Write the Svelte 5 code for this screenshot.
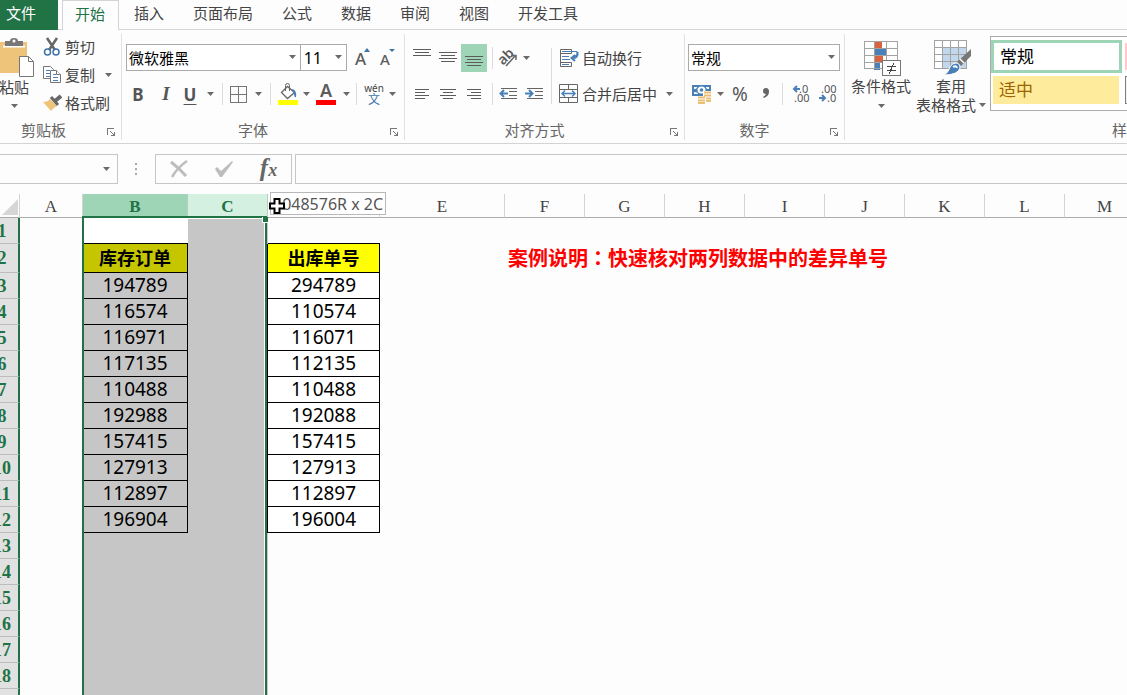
<script>
  const tabs = ['插入', '页面布局', '公式', '数据', '审阅', '视图', '开发工具'];
  const columns = ['A', 'B', 'C', 'D', 'E', 'F', 'G', 'H', 'I', 'J', 'K', 'L', 'M'];
  const stock = ['库存订单', 194789, 116574, 116971, 117135, 110488, 192988, 157415, 127913, 112897, 196904];
  const shipped = ['出库单号', 294789, 110574, 116071, 112135, 110488, 192088, 157415, 127913, 112897, 196004];
  const rows = Array.from({ length: 19 }, (_, i) => i + 1);
  const isData = (row) => row >= 2 && row <= 12;

  function cellText(row, column) {
    if (!isData(row)) return '';
    if (column === 'B') return stock[row - 2];
    if (column === 'D') return shipped[row - 2];
    return '';
  }
</script>

{#snippet caret()}
  <svg class="caret" width="7" height="4" viewBox="0 0 7 4" aria-hidden="true"><path d="M0 0h7L3.5 4z" fill="#6a6a6a" /></svg>
{/snippet}

{#snippet launcher(name)}
  <button class="launcher" aria-label={name}>
    <svg width="8" height="8" viewBox="0 0 8 8" fill="none" stroke="#777" shape-rendering="crispEdges"><path d="M.5 7V.5H7M3 3l4 4M7.5 3.500v4h-4" /><path d="M5 7h3V4z" fill="#777" stroke="none" /></svg>
  </button>
{/snippet}

{#snippet lines(list)}
  <svg width="18" height="18" viewBox="0 0 18 18" stroke="#5c5c5c" shape-rendering="crispEdges" aria-hidden="true">
    {#each list as [x1, x2, y]}<path d={`M${x1} ${y}.5H${x2}`} />{/each}
  </svg>
{/snippet}

<div class="app">
  <nav class="tabs">
    <button class="file">文件</button>
    <button class="active">开始</button>
    {#each tabs as tab}<button>{tab}</button>{/each}
  </nav>

  <div class="ribbon">
    <section class="group clipboard">
      <div class="body">
        <button class="paste">
          <svg width="40" height="40" viewBox="0 0 40 40" aria-hidden="true">
            <path d="M2 4h31v31H2z" fill="#eec47a" />
            <path d="M11 8V3h5q0-3 4-3t4 3h5v5z" fill="#777" /><path d="M9 8.500h22" stroke="#fff" stroke-width="2" /><path d="M11 5h18v3H11z" fill="#777" /><circle cx="20" cy="3" r="1.500" fill="#fff" />
            <path d="M25.500 18.500h9l5 5v15h-14z" fill="#fff" stroke="#777" /><path d="M34.500 18.500v5h5" fill="none" stroke="#777" />
          </svg>
          <span>粘贴</span>
          {@render caret()}
        </button>
        <div class="stack">
          <button>
            <svg width="18" height="20" viewBox="0 0 18 20" fill="none" aria-hidden="true"><path d="M4 1l8 12M14 1L6 13" stroke="#666" stroke-width="2.500" /><circle cx="4.500" cy="15" r="3" stroke="#3f74ab" stroke-width="1.500" /><circle cx="13" cy="15" r="3" stroke="#3f74ab" stroke-width="1.500" /></svg>
            剪切
          </button>
          <button>
            <svg width="18" height="20" viewBox="0 0 18 20" fill="#fff" stroke="#777" aria-hidden="true"><path d="M.5 1.500h7l3 3v9H.5z" /><path d="M3 5.500h4M3 8.500h5M3 11.500h4" stroke="#4a80b8" /><path d="M7.500 5.500h6l4 4v8h-10z" /><path d="M13.500 5.500v4h4" /><path d="M10 9.500h3M10 12.500h5M10 15.500h5" stroke="#4a80b8" /></svg>
            复制
            {@render caret()}
          </button>
          <button>
            <svg width="18" height="20" viewBox="0 0 18 20" aria-hidden="true"><path d="M0 9q5 0 7-3l7 7q-3 1-6 5z" fill="#eec47a" /><path d="M8 4l7 8" stroke="#666" stroke-width="3" /><path d="M12 8l6-5" stroke="#666" stroke-width="4" /></svg>
            格式刷
          </button>
        </div>
      </div>
      <footer><span>剪贴板</span>{@render launcher('剪贴板')}</footer>
    </section>

    <section class="group font">
      <div class="body rows">
        <div class="combos">
          <label class="combo wide"><select aria-label="字体"><option>微软雅黑</option></select>{@render caret()}</label>
          <label class="combo narrow"><select class="num" aria-label="字号"><option>11</option></select>{@render caret()}</label>
          <button class="resize" aria-label="增大字号">
            <svg width="20" height="24" viewBox="0 0 20 24"><text x="2" y="19" class="letter" font-size="17">A</text><path d="M11 6l3-4 3 4z" fill="#3f74ab" /></svg>
          </button>
          <button class="resize" aria-label="减小字号">
            <svg width="20" height="24" viewBox="0 0 20 24"><text x="2" y="19" class="letter" font-size="15">A</text><path d="M11 3h6l-3 3z" fill="#3f74ab" /></svg>
          </button>
        </div>
        <div class="tools font-tools">
          <button class="bold">B</button>
          <button class="italic">I</button>
          <button class="under">U</button>
          <button aria-label="下划线选项">{@render caret()}</button>
          <i class="sep"></i>
          <button aria-label="边框"><svg width="17" height="17" viewBox="0 0 17 17" fill="none" stroke="#777" shape-rendering="crispEdges"><path d="M.5.5h16v16H.5zM8.500 0v17M0 8.500h17" /></svg></button>
          <button aria-label="边框选项">{@render caret()}</button>
          <i class="sep"></i>
          <button aria-label="填充颜色"><svg width="20" height="22" viewBox="0 0 20 22"><path d="M3.500 9.500l6-6 7 6-7 6z" fill="#fff" stroke="#666" stroke-width="1.300" /><path d="M7.500 8V2.500q0-2 2-2t2 2V8" fill="none" stroke="#666" /><path d="M13 6q6 0 5 8-2 1-2-4z" fill="#4a80b8" /><path d="M0 17h20v5H0z" fill="#ff0" /></svg></button>
          <button aria-label="填充颜色选项">{@render caret()}</button>
          <button aria-label="字体颜色"><svg width="20" height="22" viewBox="0 0 20 22"><text x="10" y="14" text-anchor="middle" class="glyph" font-size="18">A</text><path d="M0 17h20v5H0z" fill="#f00" /></svg></button>
          <button aria-label="字体颜色选项">{@render caret()}</button>
          <i class="sep"></i>
          <button class="pinyin"><span>wén</span><b>文</b></button>
          <button aria-label="拼音选项">{@render caret()}</button>
        </div>
      </div>
      <footer><span>字体</span>{@render launcher('字体设置')}</footer>
    </section>

    <section class="group align">
      <div class="body">
        <div class="rows">
          <div class="tools align-tools">
            <button aria-label="顶端对齐">{@render lines([[0, 18, 0], [2, 16, 3], [0, 18, 6]])}</button>
            <button aria-label="垂直居中">{@render lines([[0, 18, 3], [2, 16, 6], [0, 18, 9], [2, 16, 12]])}</button>
            <button class="on" aria-label="底端对齐">{@render lines([[0, 18, 7], [2, 16, 10], [0, 18, 13], [2, 16, 16]])}</button>
            <i class="sep"></i>
            <button aria-label="方向"><svg width="22" height="24" viewBox="0 0 22 24"><text x="1" y="16" transform="rotate(-45 8 12)" class="glyph" font-size="14">ab</text><path d="M9 20l9-10M14 9.500h5V14" fill="none" stroke="#666" stroke-width="1.500" /></svg></button>
            <button aria-label="方向选项">{@render caret()}</button>
          </div>
          <div class="tools align-tools">
            <button aria-label="左对齐">{@render lines([[2, 16, 4], [2, 12, 7], [2, 16, 10], [2, 12, 13]])}</button>
            <button aria-label="居中">{@render lines([[1, 17, 4], [4, 14, 7], [1, 17, 10], [4, 14, 13]])}</button>
            <button aria-label="右对齐">{@render lines([[2, 16, 4], [6, 16, 7], [2, 16, 10], [6, 16, 13]])}</button>
            <i class="sep"></i>
            <button aria-label="减少缩进"><svg width="18" height="14" viewBox="0 0 18 14" fill="none" stroke="#666"><path d="M2 1.500h16M10 4.500h8M10 8.500h8M2 11.500h16" /><path d="M9 6.500H2M5 3L1.500 6.500 5 10" stroke="#4a80b8" stroke-width="2" /></svg></button>
            <button class="indent" aria-label="增加缩进"><svg width="18" height="14" viewBox="0 0 18 14" fill="none" stroke="#666"><path d="M2 1.500h16M10 4.500h8M10 8.500h8M2 11.500h16" /><path d="M0 6.500h8M4 3l3.500 3.500L4 10" stroke="#4a80b8" stroke-width="2" /></svg></button>
          </div>
        </div>
        <i class="sep tall"></i>
        <div class="rows">
          <button class="labelled">
            <svg width="20" height="20" viewBox="0 0 20 20" fill="none" stroke="#666"><path d="M12.500 5.500v-4H1.500v17h11v-4M1.500 5.500h11M1.500 14.500h11" /><path d="M3 3.500h15v4h-3M3 8.500h7M3 11.500h8M3 16.500h7" stroke="#4a80b8" /><path d="M18.500 4q1 6-5 6M16 7l-3.500 3 3.500 3" stroke="#4a80b8" stroke-width="2" /></svg>
            自动换行
          </button>
          <button class="labelled">
            <svg width="20" height="20" viewBox="0 0 20 20" fill="none" stroke="#666"><path d="M.5.5h18v18H.5zM.5 5.500h18M.5 13.500h18M9.500.5v5M9.500 13.500v5" /><path d="M3 9.500h13M6 6.500l-3 3 3 3M13 6.500l3 3-3 3" stroke="#4a80b8" stroke-width="1.500" /></svg>
            合并后居中
            {@render caret()}
          </button>
        </div>
      </div>
      <footer><span>对齐方式</span>{@render launcher('对齐设置')}</footer>
    </section>

    <section class="group number">
      <div class="body rows">
        <label class="combo"><select aria-label="数字格式"><option>常规</option></select>{@render caret()}</label>
        <div class="tools number-tools">
          <button aria-label="会计数字格式"><svg width="20" height="20" viewBox="0 0 20 20"><path d="M0 1h19v11H0z" fill="#4a80b8" /><path d="M2 3h3q0 2-3 2zM17 3h-3q0 2 3 2zM2 10h4q0-2-4-2z" fill="#fff" /><ellipse cx="9.500" cy="6" rx="4" ry="3.500" fill="#fff" /><circle cx="9.500" cy="6" r="1.800" fill="#4a80b8" /><path d="M11 7h9v11h-6v2H6v-8h5z" fill="#fff" /><path d="M12 8.500h7M12 11.500h7M14 14.500h5M14 17h5M6 13.500h7M6 16.500h7M6 19h7" stroke="#eabf73" stroke-width="2" /></svg></button>
          <button aria-label="会计选项">{@render caret()}</button>
          <button class="percent">%</button>
          <button aria-label="千位分隔样式"><svg width="8" height="12" viewBox="0 0 8 12"><path d="M4 0q3 0 3 3.500Q7 8 2 10l-1-1q3-2 3-3-3 0-3-3t3-3z" fill="#666" /></svg></button>
          <i class="sep"></i>
          <button aria-label="增加小数位数"><svg width="18" height="22" viewBox="0 0 18 22"><text x="6" y="10" class="dec">.0</text><text x="1" y="19" class="dec">.00</text><path d="M7 6H2M4 3L1 6l3 3" fill="none" stroke="#4a80b8" stroke-width="2" /></svg></button>
          <button aria-label="减少小数位数"><svg width="18" height="22" viewBox="0 0 18 22"><text x="2" y="10" class="dec">.00</text><text x="8" y="19" class="dec">.0</text><path d="M0 15h6M3 12l3 3-3 3" fill="none" stroke="#4a80b8" stroke-width="2" /></svg></button>
        </div>
      </div>
      <footer><span>数字</span>{@render launcher('数字设置')}</footer>
    </section>

    <section class="group styles">
      <div class="body">
        <button class="big">
          <svg width="40" height="36" viewBox="0 0 40 36" shape-rendering="crispEdges" aria-hidden="true">
            <path d="M3 2h34v27H3z" fill="#fff" /><path d="M13 2h8v7h-8zM13 16h9v7h-9z" fill="#d9623f" /><path d="M13 9h12v7H13zM13 23h6v7h-6z" fill="#4a80b8" />
            <path d="M3.500 1.500h33v27h-33zM13.500 2v27M25.500 2v27M3 8.500h34M3 15.500h34M3 22.500h34" fill="none" stroke="#a2a2a2" />
            <path d="M21.500 20.500h18v15h-18z" fill="#fff" stroke="#777" /><path d="M26 26.500h9M26 30.500h9M33 23l-5 11" stroke="#444" fill="none" />
          </svg>
          <span>条件格式</span>
          {@render caret()}
        </button>
        <button class="big">
          <svg width="40" height="36" viewBox="0 0 40 36" aria-hidden="true">
            <path d="M3 1h33v27H3z" fill="#fff" /><path d="M12 8h24v20H12z" fill="#c3d7ec" />
            <path d="M3.500.5h32v28h-32zM11.500 1v27M19.500 1v27M27.500 1v27M3 7.500h33M3 14.500h33M3 21.500h33" fill="none" stroke="#a2a2a2" shape-rendering="crispEdges" />
            <path d="M40 9v7L30 26l-4-4z" fill="#777" /><path d="M29 19l4 4" stroke="#fff" stroke-width="1.500" /><path d="M25 23q4 0 4 5-2 7-16 7 5-3 6-8 2-4 6-4z" fill="#4a80b8" stroke="#fff" /><path d="M22 27q3-2 4 1" stroke="#fff" stroke-width="2" fill="none" />
          </svg>
          <span>套用</span>
          <span class="inline">表格格式 {@render caret()}</span>
        </button>
        <div class="gallery">
          <button class="normal">常规</button>
          <button class="bad" aria-label="差"></button>
          <button class="neutral">适中</button>
          <button class="calc" aria-label="计算"></button>
        </div>
      </div>
      <footer><span>样式</span></footer>
    </section>
  </div>

  <div class="formula">
    <div class="name-box"><input aria-label="名称框" /><button aria-label="名称列表">{@render caret()}</button></div>
    <svg class="grip" width="3" height="12" viewBox="0 0 3 12" aria-hidden="true"><path d="M0 0h2v2H0zM0 5h2v2H0zM0 10h2v2H0z" fill="#aaa" /></svg>
    <div class="entry">
      <button aria-label="取消"><svg width="18" height="18" viewBox="0 0 18 18" fill="none" stroke="#bdbdbd"><path d="M1 2q8 6 15 14" stroke-width="3" /><path d="M17 1Q8 7 2 17" stroke-width="2.500" /></svg></button>
      <button aria-label="输入"><svg width="20" height="18" viewBox="0 0 20 18"><path d="M1 9l2-2 4 4L18 1l1 1L8 17H6z" fill="#bdbdbd" /></svg></button>
      <button class="fx"><span>f</span>x</button>
    </div>
    <input class="formula-input" aria-label="编辑栏" />
  </div>

  <div class="sheet">
    <table>
      <colgroup>
        <col class="c-head" /><col class="c-a" /><col class="c-b" /><col /><col class="c-d" /><col class="c-e" />
        {#each columns.slice(5) as c (c)}<col />{/each}
      </colgroup>
      <thead>
        <tr>
          <th class="corner"><svg width="18" height="18" viewBox="0 0 18 18" aria-hidden="true"><path d="M17 1v16H1z" fill="#d6d6d6" /></svg></th>
          {#each columns as c (c)}
            <th class:sel-b={c === 'B'} class:sel-c={c === 'C'}>{c}</th>
          {/each}
        </tr>
      </thead>
      <tbody>
        {#each rows as row (row)}
          <tr class:title-row={row === 2} class:data={isData(row)} class:before={row === 1}>
            <th>{row}</th>
            {#each row === 2 ? columns.slice(0, 5) : columns as c (c)}
              <td class={`col-${c}`}>{cellText(row, c)}</td>
            {/each}
            {#if row === 2}
              <td class="note" colspan="6">案例说明<span class="colon">：</span>快速核对两列数据中的差异单号</td>
              <td></td>
              <td></td>
            {/if}
          </tr>
        {/each}
      </tbody>
    </table>
    <div class="selection"><i></i></div>
    <div class="tip">1048576R x 2C</div>
    <svg class="cursor" width="16" height="16" viewBox="0 0 16 16" aria-hidden="true"><path d="M5.500 1h5v4.500H15v5h-4.500V15h-5v-4.500H1v-5h4.500z" fill="#fff" stroke="#000" stroke-width="2" /></svg>
  </div>
</div>

<style>
  :global(body) { margin: 0; background: #fdfdfd; overflow: hidden; }
  .app {
    --green: #217346;
    --sans: "Noto Sans", "Noto Sans CJK SC", sans-serif;
    margin-left: -14px;
    height: 100vh;
    overflow: hidden;
    display: flex;
    flex-direction: column;
    font: 15px/20px "Noto Sans CJK SC", sans-serif;
    color: #444;
    white-space: nowrap;
  }
  button, input, select { font: inherit; color: inherit; background: none; border: 0; padding: 0; margin: 0; border-radius: 0; box-sizing: border-box; white-space: nowrap; }
  svg { display: block; flex: none; overflow: visible; }

  .tabs { display: flex; gap: 1px; height: 30px; flex: none; box-sizing: border-box; border-bottom: 1px solid #d4d4d4; }
  .tabs button { padding: 0 14px 4px; height: 29px; }
  .tabs .file { width: 72px; height: 30px; padding: 0 2px 4px 0; margin-right: 3px; background: var(--green); color: #fff; }
  .tabs .active { height: 30px; padding: 0 13px 4px 12px; border: 1px solid #d4d4d4; border-width: 1px 1px 0; background: #fdfdfd; color: var(--green); }
  .tabs .file, .tabs .active { flex: none; }

  .ribbon { display: flex; flex: none; height: 114px; box-sizing: border-box; padding: 4px 0 3px; border-bottom: 1px solid #d4d4d4; }
  .group { flex: none; display: flex; flex-direction: column; box-sizing: border-box; border-right: 1px solid #e1e1e1; }
  .body { flex: 1; display: flex; padding: 10px 4px 0 3px; }
  .rows { display: flex; flex-direction: column; gap: 8px; }
  .group footer { display: flex; height: 20px; color: #666; }
  footer span { flex: 1; text-align: center; }
  .launcher { width: 20px; padding-top: 4px; display: grid; place-items: center; }
  .clipboard { width: 136px; }
  .font { width: 283px; }
  .align { width: 280px; }
  .number { width: 160px; }
  .styles { width: 564px; border-right: 0; }

  .clipboard .body { padding: 0; }
  .paste { width: 56px; height: 76px; padding-top: 4px; display: flex; flex-direction: column; align-items: center; line-height: 18px; }
  .paste .caret { margin-top: 8px; }
  .stack { display: grid; grid-template-rows: repeat(3, 28px); justify-items: start; margin-top: -1px; }
  .stack button { display: flex; align-items: center; gap: 4px; margin-left: 1px; }
  .stack .caret { margin-left: 6px; }

  .combos { display: flex; height: 28px; padding-left: 1px; }
  .combo { position: relative; display: block; height: 28px; }
  .combo.wide { width: 176px; }
  .combo.narrow { width: 47px; }
  .combo select { appearance: none; width: 100%; height: 27px; border: 1px solid #ababab; background: #fff; padding: 0 2px; color: #000; }
  .combo.narrow select { border-left: 0; }
  .combo select.num { font: 16px var(--sans); padding-left: 3px; }
  .combo .caret { position: absolute; right: 5px; top: 11px; pointer-events: none; }
  .resize { width: 25px; display: grid; place-items: center; }
  .combos .resize:first-of-type { margin-left: 3px; }
  .glyph { font-family: "Noto Sans"; font-weight: 600; fill: #5c5c5c; }
  .letter { font-family: "Noto Sans"; font-weight: 500; fill: #5c5c5c; }

  .tools { display: grid; height: 28px; }
  .tools > * { display: grid; place-items: center; }
  .font-tools { grid-template-columns: 28px 28px 20px 20px 4px 28px 12px 12px 24px 12px 28px 12px 8px 28px 8px; margin-left: -1px; }
  .align-tools { grid-template-columns: 28px 24px 28px 8px 24px 28px; }
  .align-tools button:last-child .caret { justify-self: start; margin-left: 3px; }
  .number-tools { grid-template-columns: 28px 8px 32px 20px 12px 28px 24px; }
  .sep { justify-self: center; width: 1px; height: 22px; align-self: center; background: #dcdcdc; }
  .sep.tall { height: 56px; align-self: flex-start; margin: 4px 7px 0 3px; }
  .bold, .italic, .under { font: bold 17px var(--sans); color: #555; }
  .italic { font: italic bold 19px "Liberation Serif", serif; }
  .under { text-decoration: underline; text-decoration-thickness: 1px; text-underline-offset: 3px; }
  .on { background: #9fd5b7; margin: 0 1px; }
  .pinyin { align-content: center; font: 10px/10px var(--sans); }
  .pinyin b { font: 12px/12px "Noto Sans CJK SC", sans-serif; color: #3f74ab; }
  .percent { font: 19px var(--sans); color: #555; }
  .dec { font: 11px "Noto Sans"; fill: #555; }
  .labelled { height: 28px; padding-bottom: 1px; display: flex; align-items: center; gap: 3px; }
  .labelled .caret { margin-left: 6px; }

  .styles .body { padding: 2px 3px 0 1px; }
  .big { width: 70px; padding-top: 4px; display: flex; flex-direction: column; align-items: center; line-height: 19px; }
  .big > .caret { margin-top: 9px; }
  .big .inline { display: flex; align-items: center; gap: 3px; }
  .gallery { flex: 1; height: 75px; margin-left: 4px; box-sizing: border-box; border: 1px solid #ababab; padding: 3px 1px 3px 0; display: grid; grid-template: 33px 28px / 131px 131px; gap: 3px 1px; font-size: 17px; background: #fff; }
  .gallery button { text-align: left; padding: 0 0 2px 6px; }
  .gallery .normal { border: 3px solid #9fd5b7; color: #000; }
  .gallery .neutral { background: #ffeb9c; color: #9c6500; margin: 0 3px 0 2px; }
  .gallery .bad { background: #ffc7ce; margin: 3px 2px; }
  .gallery .calc { border: 1px solid #7f7f7f; background: #f2f2f2; margin: 0 2px; }

  .formula { flex: none; display: flex; align-items: center; height: 50px; }
  .name-box, .entry, .formula-input { height: 30px; box-sizing: border-box; border: 1px solid #c6c6c6; background: #fdfdfd; }
  .name-box { display: flex; width: 132px; }
  .name-box input { flex: 1; min-width: 0; }
  .name-box button { width: 22px; display: grid; place-items: center; }
  .grip { margin: 0 17px; }
  .entry { display: grid; grid-template-columns: repeat(3, 45px); width: 137px; }
  .entry button { display: grid; place-items: center; }
  .entry .fx { display: block; font: italic bold 18px/26px "Liberation Serif", serif; color: #666; }
  .fx span { font-size: 25px; }
  .formula-input { flex: 1; margin-left: 3px; border-right: 0; padding: 0 8px; }

  .sheet { position: relative; flex: 1; min-height: 0; }
  table { table-layout: fixed; border-collapse: separate; border-spacing: 0; width: 1159px; }
  col { width: 80px; }
  .c-head { width: 34px; }
  .c-a { width: 63px; }
  .c-b { width: 105px; }
  .c-d { width: 112px; }
  .c-e { width: 125px; }
  th, td { box-sizing: border-box; padding: 0; height: 26px; line-height: 24px; }
  th { font-family: "Liberation Serif", serif; font-size: 17px; font-weight: 400; }
  thead th { height: 24px; line-height: 20px; padding-top: 3px; border-right: 1px solid #d4d4d4; border-bottom: 1px solid #ababab; }
  thead .sel-b, thead .sel-c { color: var(--green); font-weight: 700; background: #9fd5b7; border-right-color: #b8ccc0; }
  thead .sel-c { background: #d3f0e0; }
  .corner svg { margin-left: 15px; }
  tbody th { background: #e1e1e1; color: var(--green); font-weight: 700; font-size: 18px; border-right: 2px solid var(--green); border-bottom: 1px solid #bdbdbd; }
  td { font: 19px/22px var(--sans); padding-bottom: 2px; color: #000; text-align: center; }
  .col-B, .col-C { background: #c6c6c6; }
  .before .col-B { background: #fff; }
  .before .col-B, .before .col-D, .data .col-B, .data .col-D { border-bottom: 1px solid #000; }
  .data .col-B, .data .col-C, .data .col-D { border-right: 1px solid #000; }
  .data .col-D { background: #fff; }
  .title-row th, .title-row td { height: 29px; }
  .title-row .col-B, .title-row .col-D { font: bold 18px/24px "Noto Sans CJK SC", sans-serif; }
  .title-row .col-B { background: #c6c600; }
  .title-row .col-D { background: #ff0; }
  .title-row .note { padding-left: 3px; font: bold 20px/24px "Noto Sans CJK SC", sans-serif; color: #f00; text-align: left; }
  .colon { font-family: "Noto Sans CJK TC", sans-serif; }

  /* Overlays above the cells: selected range, size hint and pointer */
  .selection { position: absolute; left: 96px; top: 22px; bottom: -4px; width: 185px; box-sizing: border-box; border: 2px solid var(--green); box-shadow: inset -1px 1px #fff; }
  .selection i { position: absolute; right: -3px; top: -1px; width: 5px; height: 5px; background: var(--green); border: 1px solid #fff; border-width: 0 0 1px 1px; }
  .tip { position: absolute; left: 284px; top: -2px; height: 23px; box-sizing: border-box; border: 1px solid #b8b8b8; background: #fff; padding: 0 2px; font: 16px/22px var(--sans); color: #555; }
  .cursor { position: absolute; left: 283px; top: 4px; }
</style>
